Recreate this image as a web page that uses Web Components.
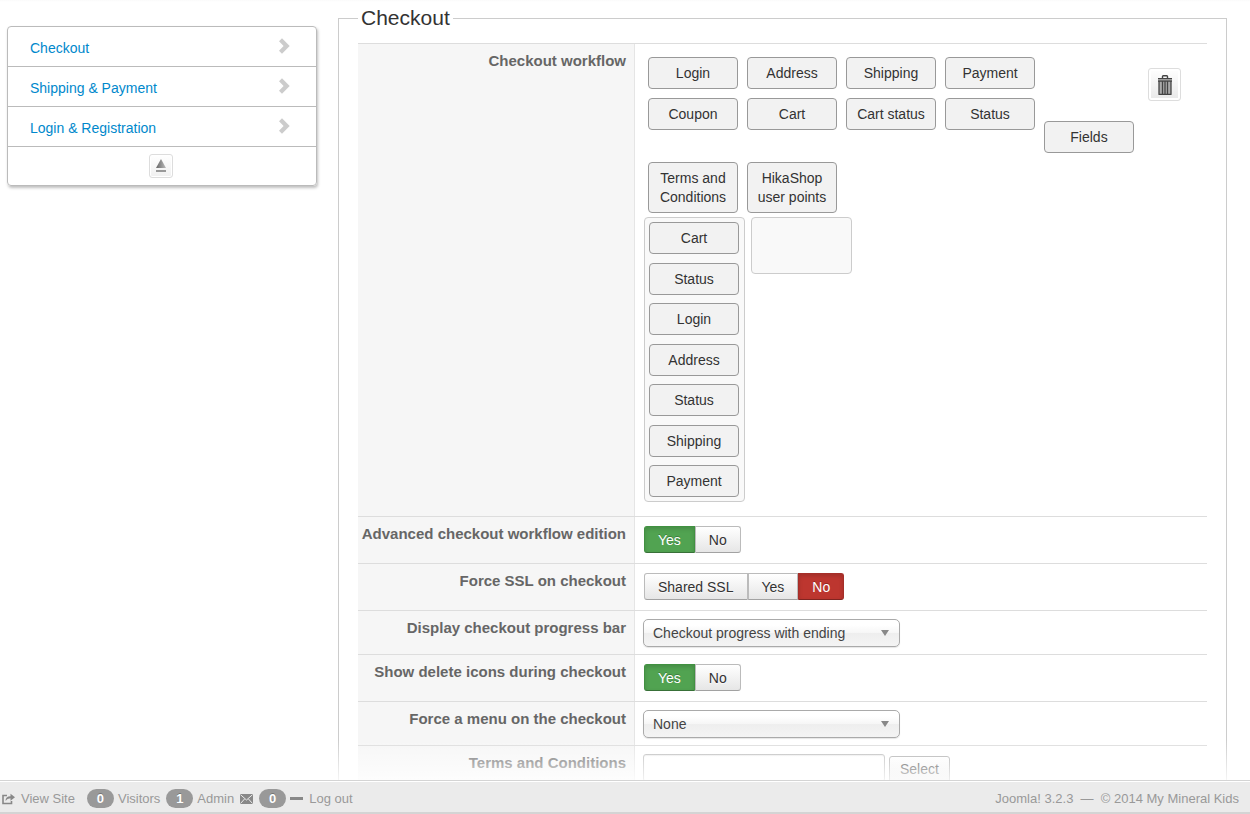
<!DOCTYPE html>
<html lang="en">
<head>
<meta charset="utf-8">
<title>Checkout configuration</title>
<style>
  body { margin: 0; font: 14px/18px "Liberation Sans", Arial, sans-serif; color: #333; background: #fff; }
</style>
</head>
<body>
<admin-shell>
  <side-menu slot="side"></side-menu>
  <checkout-settings></checkout-settings>
  <status-bar slot="status"></status-bar>
</admin-shell>

<script>
const define = (name, html, setup) => customElements.define(name, class extends HTMLElement {
  constructor() {
    super();
    this.attachShadow({ mode: "open" }).innerHTML = html;
  }
  connectedCallback() { if (setup) setup.call(this, this.shadowRoot); }
});

/* Page frame: scrolling content above a fixed-height status bar */
define("admin-shell", `
<style>
  :host { display: flex; flex-direction: column; height: 100vh; }
  .view { position: relative; flex: 1; min-height: 0; display: flex; }
  .view::after { content: ""; position: absolute; left: 0; right: 0; bottom: 0; height: 40px;
    background: linear-gradient(rgba(255,255,255,0), rgba(255,255,255,.8)); pointer-events: none; }
  main { flex: 1; display: flex; gap: 21px; align-items: flex-start; overflow-y: auto; scrollbar-width: none;
    padding: 0 23px 0 7px; background: linear-gradient(#fafafa, #fff 2px); }
  aside { flex: 0 0 310px; padding-top: 26px; }
  section { flex: 1; min-width: 0; padding-top: 8px; }
</style>
<div class="view"><main><aside><slot name="side"></slot></aside><section><slot></slot></section></main></div>
<slot name="status"></slot>`);

define("side-menu", `
<style>
  :host { display: block; }
  nav { border: 1px solid #bbb; border-radius: 4px; box-shadow: 1px 2px 3px rgba(0,0,0,.25); }
  .top { display: flex; justify-content: center; align-items: center; height: 38px; padding-right: 2px; }
  button { display: grid; place-items: center; width: 24px; height: 24px; padding: 0; border: 1px solid #ddd;
    border-radius: 3px; background: linear-gradient(#fff, #f0f0f0); box-shadow: inset 0 0 0 1px #fff; }
</style>
<nav aria-label="Sections">
  <menu-link href="#checkout">Checkout</menu-link>
  <menu-link href="#shipping">Shipping &amp; Payment</menu-link>
  <menu-link href="#login">Login &amp; Registration</menu-link>
  <div class="top"><button type="button" aria-label="Back to top">
    <svg width="12" height="14" viewBox="0 0 12 14"><defs><linearGradient id="g"><stop offset="0" stop-color="#666"/><stop offset="1" stop-color="#bbb"/></linearGradient></defs>
      <path d="M6 0 11 9H1z" fill="url(#g)"/><path d="M1 11h10v2H1z" fill="#999"/></svg>
  </button></div>
</nav>`);

define("menu-link", `
<style>
  :host { display: block; border-bottom: 1px solid #bbb; }
  a { display: flex; justify-content: space-between; align-items: center; box-sizing: border-box; height: 39px;
    padding: 0 26px 2px 22px; color: #08c; text-decoration: none; }
  span { padding-top: 5px; }
</style>
<a><span><slot></slot></span>
  <svg width="12" height="16" viewBox="0 0 12 16"><path d="M4 .3 11.700 8 4 15.700 1 12.700 5.600 8 1 3.300z" fill="#ccc"/></svg></a>`,
function (root) { root.querySelector("a").href = this.getAttribute("href"); });

/* One label/value line of the settings list */
define("setting-row", `
<style>
  :host { display: grid; grid-template-columns: 277px 1fr; border-top: 1px solid #ddd; }
  .key { padding: 8px 8px 0 0; background: #f6f6f6; border-right: 1px solid #e5e5e5;
    text-align: right; font-weight: bold; font-size: 15px; color: #666; }
  .value { padding: 8px 0 7px 8px; min-width: 0; }
</style>
<div class="key"><slot name="label"></slot></div><div class="value"><slot></slot></div>`);

define("view-chip", `
<style>
  :host { display: block; }
  button { display: block; width: 90px; min-height: 32px; padding: 6px 4px 5px; border: 1px solid #999; border-radius: 4px;
    background: #f2f2f2; color: #333; font: inherit; line-height: 19px; text-align: center; cursor: move; }
</style>
<button type="button"><slot></slot></button>`);

define("checkout-workflow", `
<style>
  :host { display: block; padding-left: 1px; }
  .top { display: flex; justify-content: space-between; padding: 5px 26px 4px 4px; }
  .palette { display: grid; grid-template-columns: repeat(5, 90px); grid-template-rows: auto 55px auto; gap: 9px; }
  .low { align-self: end; }
  .trash { display: grid; place-items: center; width: 33px; height: 33px; margin-top: 11px; padding: 0;
    border: 1px solid #ddd; border-radius: 3px; background: linear-gradient(#fff, #e8e8e8); box-shadow: inset 0 0 0 2px #fff; }
  .steps { display: flex; align-items: flex-start; gap: 6px; padding-bottom: 7px; }
  .step { box-sizing: border-box; display: flex; flex-direction: column; justify-content: space-between;
    width: 101px; min-height: 57px; padding: 4px; border: 1px solid #ccc; border-radius: 4px; background: #f9f9f9; }
  .step.full { min-height: 285px; }
</style>
<div class="top">
  <div class="palette">
    <view-chip>Login</view-chip><view-chip>Address</view-chip><view-chip>Shipping</view-chip><view-chip>Payment</view-chip><i></i>
    <view-chip>Coupon</view-chip><view-chip>Cart</view-chip><view-chip>Cart status</view-chip><view-chip>Status</view-chip><view-chip class="low">Fields</view-chip>
    <view-chip>Terms and Conditions</view-chip><view-chip>HikaShop user points</view-chip>
  </div>
  <button class="trash" type="button" aria-label="Delete">
    <svg width="14" height="20" viewBox="0 0 14 20" fill="none"><path d="M4.500 3V1.500Q4.500.7 5.300.7h3.400q.8 0 .8.800V3" stroke="#444" stroke-width="1.400"/><path d="M0 3h14v1.500H0z" fill="#444"/><path d="M1 6h12v13.500H1z" fill="#aaa"/><path d="M0 6h14M1 6v13.500M4.500 6v13M7 6v13M9.500 6v13M13 6v13.500M.5 19.300h13" stroke="#444" stroke-width="1.300"/></svg>
  </button>
</div>
<div class="steps">
  <div class="step full"><view-chip>Cart</view-chip><view-chip>Status</view-chip><view-chip>Login</view-chip><view-chip>Address</view-chip><view-chip>Status</view-chip><view-chip>Shipping</view-chip><view-chip>Payment</view-chip></div>
  <div class="step"></div>
</div>`);

/* Segmented radio buttons built from a comma-separated list of options */
define("choice-group", `
<style>
  :host { display: block; padding: 1px 0 3px 1px; }
  fieldset { display: flex; margin: 0; padding: 0; border: 0; }
  label { position: relative; box-sizing: border-box; height: 27px; padding: 4px 13px 0; border: 1px solid #bbb; border-bottom-color: #a2a2a2;
    background: linear-gradient(#fff, #e6e6e6); text-shadow: 0 1px 1px rgba(255,255,255,.75); }
  label:first-of-type { border-radius: 3px 0 0 3px; }
  label:last-of-type { border-radius: 0 3px 3px 0; }
  input { position: absolute; inset: 0; margin: 0; opacity: 0; }
  label.on { color: #fff; text-shadow: 0 -1px 0 rgba(0,0,0,.25); box-shadow: inset 0 2px 4px rgba(0,0,0,.15); }
  label.yes { background: #51a351; border-color: #419141 #419141 #387038; }
  label.no { background: #bd362f; border-color: #a52f29 #a52f29 #802420; }
</style>
<fieldset></fieldset>`,
function (root) {
  const set = root.querySelector("fieldset"), chosen = this.getAttribute("value");
  set.setAttribute("aria-label", this.getAttribute("label"));
  const paint = () => set.querySelectorAll("label").forEach(l => {
    const on = l.querySelector("input").checked;
    l.className = on ? "on " + (l.textContent === "No" ? "no" : "yes") : "";
  });
  this.getAttribute("options").split(",").forEach(text => {
    const label = document.createElement("label"), input = document.createElement("input");
    input.type = "radio"; input.name = "choice"; input.checked = text === chosen;
    label.append(input, text);
    set.append(label);
  });
  set.addEventListener("change", paint);
  paint();
});

define("checkout-settings", `
<style>
  :host { display: block; }
  fieldset { margin: 0; padding: 0 19px 20px; border: 1px solid #ccc; min-width: 0; }
  legend { padding: 0 3px; font-size: 21px; line-height: 20px; margin-bottom: 15px; }
  select { appearance: none; display: block; box-sizing: border-box; width: 257px; height: 28px; padding: 0 24px 0 9px; border: 1px solid #aaa; border-radius: 5px;
    font: inherit; color: #444; box-shadow: 0 1px 1px rgba(0,0,0,.1);
    background: url("data:image/svg+xml,%3Csvg xmlns='http://www.w3.org/2000/svg' width='8' height='6'%3E%3Cpath d='M0 0h8L4 6z' fill='%23888'/%3E%3C/svg%3E") right 10px top 10px no-repeat,
      linear-gradient(#fff 20%, #f6f6f6 50%, #eee 52%, #f4f4f4); }
  .pick { display: flex; align-items: flex-start; gap: 4px; }
  input { box-sizing: border-box; width: 242px; height: 28px; border: 1px solid #bbb; border-radius: 3px; font: inherit; box-shadow: inset 0 1px 1px rgba(0,0,0,.08); }
  .pick button { height: 27px; margin-top: 2px; padding: 0 10px 1px; border: 1px solid #aaa; border-radius: 3px; background: linear-gradient(#fff, #e6e6e6); font: inherit; color: #333; }
</style>
<fieldset>
  <legend>Checkout</legend>
  <setting-row><span slot="label">Checkout workflow</span><checkout-workflow></checkout-workflow></setting-row>
  <setting-row><span slot="label">Advanced checkout workflow edition</span><choice-group label="Advanced checkout workflow edition" options="Yes,No" value="Yes"></choice-group></setting-row>
  <setting-row><span slot="label">Force SSL on checkout</span><choice-group label="Force SSL on checkout" options="Shared SSL,Yes,No" value="No"></choice-group></setting-row>
  <setting-row><label slot="label" for="bar">Display checkout progress bar</label><select id="bar"><option>Checkout progress with ending</option></select></setting-row>
  <setting-row><span slot="label">Show delete icons during checkout</span><choice-group label="Show delete icons during checkout" options="Yes,No" value="Yes"></choice-group></setting-row>
  <setting-row><label slot="label" for="menu">Force a menu on the checkout</label><select id="menu"><option>None</option></select></setting-row>
  <setting-row><label slot="label" for="terms">Terms and Conditions</label><div class="pick"><input id="terms" type="text"><button type="button">Select</button></div></setting-row>
</fieldset>`);

define("count-badge", `
<style>
  :host { display: block; box-sizing: border-box; min-width: 27px; padding: 0 9px; border-radius: 10px; background: #999; color: #fff;
    font-weight: bold; line-height: 19px; text-align: center; text-shadow: 0 -1px 0 rgba(0,0,0,.25); }
</style><slot></slot>`);

define("status-bar", `
<style>
  :host { display: flex; justify-content: space-between; align-items: center; box-sizing: border-box; height: 34px; padding: 4px 11px 0 2px;
    background: #ebebeb; border-top: 1px solid #d4d4d4; border-bottom: 2px solid #d4d4d4; box-shadow: inset 0 1px 0 #fff;
    font-size: 13px; color: #999; }
  .group { display: flex; align-items: center; gap: 6px; }
  .pair { display: flex; align-items: center; gap: 4px; }
  .group > a:first-child { margin-right: 6px; }
  a { display: flex; align-items: center; gap: 6px; color: inherit; text-decoration: none; }
  .copy { white-space: pre; }
</style>
<div class="group">
  <a href="#site"><svg width="13" height="12" viewBox="0 0 13 12" fill="none"><path d="M5 2.500H1v8h8.500V8" stroke="#888" stroke-width="1.600"/><path d="M3.500 8Q3.500 3.300 8.500 3.300V.8L13 4.300 8.500 7.800V5.300Q5 5.300 3.500 8z" fill="#888"/></svg>View Site</a>
  <div class="pair"><count-badge>0</count-badge><span>Visitors</span></div>
  <div class="pair"><count-badge>1</count-badge><span>Admin</span></div>
  <a href="#messages" aria-label="Messages"><svg width="13" height="10" viewBox="0 0 13 10"><path d="M0 0h13v10H0z" fill="#888"/><path d="M.5.7 6.500 6l6-5.300M.5 9.500 4.500 5M12.500 9.500 8.500 5" fill="none" stroke="#ebebeb"/></svg></a>
  <div class="pair"><count-badge>0</count-badge>
  <a href="#logout"><svg width="13" height="3" viewBox="0 0 13 3"><path d="M0 0h13v3H0z" fill="#888"/></svg>Log out</a></div>
</div>
<div class="copy">Joomla! 3.2.3  —  © 2014 My Mineral Kids</div>`);
</script>
</body>
</html>
